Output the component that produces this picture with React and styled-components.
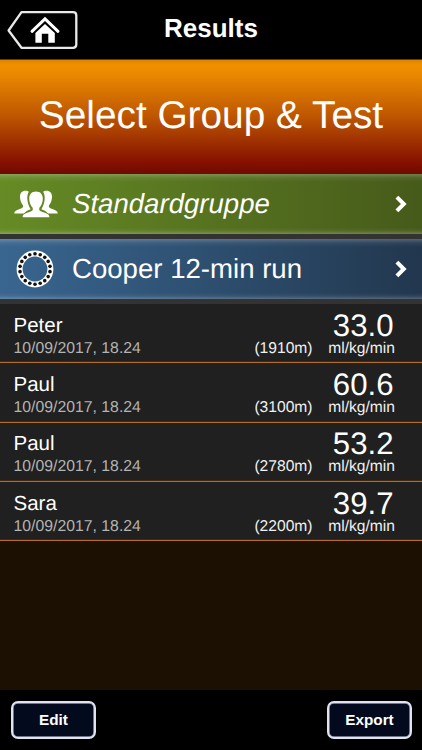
import styled, { createGlobalStyle } from 'styled-components';

const results = [
  { id: 1, name: 'Peter', date: '10/09/2017, 18.24', distance: '1910m', value: '33.0' },
  { id: 2, name: 'Paul', date: '10/09/2017, 18.24', distance: '3100m', value: '60.6' },
  { id: 3, name: 'Paul', date: '10/09/2017, 18.24', distance: '2780m', value: '53.2' },
  { id: 4, name: 'Sara', date: '10/09/2017, 18.24', distance: '2200m', value: '39.7' },
];

const BackIcon = () => (
  <svg width="72" height="42" viewBox="6 9 72 42" fill="none">
    <path
      d="M21.5 12.2H73Q76.3 12.2 76.3 15.5V44.5Q76.3 47.8 73 47.8H21.5L8.6 30.5Z"
      stroke="#e9e9e9"
      strokeWidth="2.3"
      strokeLinejoin="round"
    />
    <path d="M32 31.3L45 18.9L58 31.3" stroke="#fff" strokeWidth="3" strokeLinecap="round" />
    <path d="M45 24L54.8 33V42.7H48.3V33.8H41.8V42.7H35.4V33Z" fill="#fff" />
  </svg>
);

const GroupIcon = () => (
  <svg width="44" height="28" viewBox="0 0 44 28" fill="#fff">
    <path d="M14 1.2C9.2-.2 6 2.3 6 6.6C6 10.2 7.2 13.4 8.9 15.2C9.7 17 8.5 18 6.4 18.8C2.5 20.2.4 21 .2 23.4H10C12 21 14 20.3 16.7 19.2C13.6 14.8 11.8 6.8 14.8 1.7Z" />
    <path d="M30 1.2C34.8-.2 38 2.3 38 6.6C38 10.2 36.8 13.4 35.1 15.2C34.3 17 35.5 18 37.6 18.8C41.5 20.2 43.6 21 43.8 23.4H34C32 21 30 20.3 27.3 19.2C30.4 14.8 32.2 6.8 29.2 1.7Z" />
    <path
      d="M22 1.4C17.6 1.4 15.2 4.2 15.2 8.5C15.2 12.4 16.6 15.8 18.6 17.7C19.4 20 18.3 21 15.4 22.1C11.2 23.6 8.8 24.3 8.6 27.2H35.4C35.2 24.3 32.8 23.6 28.6 22.1C25.7 21 24.6 20 25.4 17.7C27.4 15.8 28.8 12.4 28.8 8.5C28.8 4.2 26.4 1.4 22 1.4Z"
      stroke="#628624"
      strokeWidth="1.4"
      paintOrder="stroke"
    />
  </svg>
);

const dots = Array.from({ length: 18 }, (_, i) => (i * Math.PI * 2) / 18);

const TrackIcon = () => (
  <svg width="38" height="38" viewBox="-19 -19 38 38">
    <circle r="15.4" fill="none" stroke="#fff" strokeWidth="6" />
    {dots.map((a) => (
      <circle key={a} cx={15.2 * Math.sin(a)} cy={-15.2 * Math.cos(a)} r="1.8" fill="#111" />
    ))}
  </svg>
);

const ChevronIcon = () => (
  <svg width="12" height="18" viewBox="0 0 12 18" fill="none">
    <path d="M1.9 2.1L8.8 9L1.9 15.9" stroke="#fff" strokeWidth="4" />
  </svg>
);

const App = () => {
  return (
    <Screen>
      <GlobalStyle />
      <Header>
        <BackButton aria-label="Home">
          <BackIcon />
        </BackButton>
        <Title>Results</Title>
      </Header>
      <Hero>Select Group &amp; Test</Hero>
      <Selector $from="#668b25" $to="#465a1a">
        <IconBox $gap={1}>
          <GroupIcon />
        </IconBox>
        <SelectorLabel $italic>Standardgruppe</SelectorLabel>
        <ChevronIcon />
      </Selector>
      <Selector $from="#396690" $to="#22374e">
        <IconBox $gap={3}>
          <TrackIcon />
        </IconBox>
        <SelectorLabel>Cooper 12-min run</SelectorLabel>
        <ChevronIcon />
      </Selector>
      <ResultList>
        {results.map((item) => (
          <ResultRow key={item.id}>
            <Person>
              <Name>{item.name}</Name>
              <DateText>{item.date}</DateText>
            </Person>
            <Small>({item.distance})</Small>
            <Score>
              <Value>{item.value}</Value>
              <Small>ml/kg/min</Small>
            </Score>
          </ResultRow>
        ))}
      </ResultList>
      <Footer>
        <FooterButton>Edit</FooterButton>
        <FooterButton>Export</FooterButton>
      </Footer>
    </Screen>
  );
};

export default App;

const GlobalStyle = createGlobalStyle`
  * {
    box-sizing: border-box;
  }
  body {
    margin: 0;
    background: #000;
    font-family: 'Liberation Sans', Arial, sans-serif;
    text-rendering: geometricPrecision;
  }
`;

const Screen = styled.div`
  width: 422px;
  height: 750px;
  display: flex;
  flex-direction: column;
  overflow: hidden;
  color: #fff;
  background: #1c1002;
`;

const Header = styled.header`
  height: 59px;
  flex-shrink: 0;
  display: grid;
  grid-template-columns: 84px 1fr 84px;
  background: #000;
`;
const BackButton = styled.button`
  display: flex;
  padding: 9px 0 0 6px;
  border: 0;
  background: none;
`;
const Title = styled.h1`
  margin: 0;
  font-size: 26px;
  font-weight: 700;
  line-height: 56px;
  text-align: center;
`;

const Hero = styled.div`
  height: 115px;
  flex-shrink: 0;
  border-top: 1px solid #6b3b00;
  font-size: 38.8px;
  line-height: 112px;
  text-align: center;
  background: linear-gradient(#dc8400 0, #f09100 5px, #ea8900 14px, #bd5500 50%, #851000 90%, #6f0a00 100%);
`;

const Selector = styled.div`
  height: 65px;
  flex-shrink: 0;
  display: flex;
  align-items: center;
  padding-right: 15px;
  border-bottom: 5px solid #333;
  background: linear-gradient(
      rgba(255, 255, 255, 0.22) 0,
      rgba(255, 255, 255, 0.06) 4px,
      transparent 8px,
      transparent 54px,
      rgba(255, 255, 255, 0.06) 57px,
      rgba(255, 255, 255, 0.22) 60px
    ),
    linear-gradient(90deg, ${(props) => props.$from}, ${(props) => props.$to});
`;
const IconBox = styled.div`
  width: 72px;
  display: flex;
  justify-content: center;
  padding-right: ${(props) => props.$gap}px;
`;
const SelectorLabel = styled.span`
  flex: 1;
  font-size: 27.6px;
  line-height: 60px;
  font-style: ${(props) => (props.$italic ? 'italic' : 'normal')};
`;

const ResultList = styled.div`
  flex: 1;
`;
const ResultRow = styled.div`
  height: 59.3px;
  display: flex;
  align-items: flex-end;
  padding: 0 27px 4.6px 13.5px;
  border-bottom: 1px solid #b46d22;
  background: #202020;
  box-shadow: inset 0 -1px #472809;
`;
const Person = styled.div`
  flex: 1;
`;
const Name = styled.div`
  margin-bottom: 2px;
  font-size: 20.5px;
  line-height: 24px;
`;
const Small = styled.div`
  font-size: 15.6px;
  line-height: 18px;
  color: #f0f0f0;
`;
const DateText = styled(Small)`
  font-size: 15.8px;
  color: #b4b4b4;
`;
const Score = styled.div`
  width: 82.5px;
  text-align: right;
`;
const Value = styled.div`
  padding-right: 1.5px;
  font-size: 31.2px;
  line-height: 28px;
`;

const Footer = styled.footer`
  height: 60px;
  flex-shrink: 0;
  display: flex;
  justify-content: space-between;
  padding: 11px 10px 0 11px;
  background: #000;
`;
const FooterButton = styled.button`
  width: 85px;
  height: 38px;
  padding: 0 0 1px;
  border: 2px solid #dfe3f2;
  border-radius: 7px;
  box-shadow: inset 0 0 0 0.5px #dfe3f2;
  color: #fff;
  font-family: inherit;
  font-size: 15.3px;
  font-weight: 700;
  background: #030a1e;
`;
